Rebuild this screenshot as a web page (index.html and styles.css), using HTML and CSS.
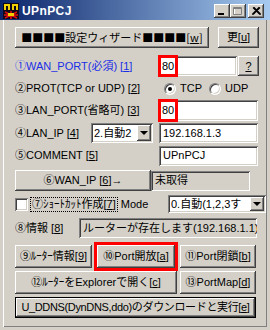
FILE: index.html
```html
<!DOCTYPE html>
<html lang="ja">
<head>
  <meta charset="UTF-8">
  <title>UPnPCJ</title>
  <link rel="stylesheet" href="styles.css">
</head>
<body>
  <div class="window">
    <div class="titlebar">
      <svg class="app-icon" width="16" height="16" viewBox="0 0 16 16">
        <rect width="16" height="16" fill="#100818"/>
        <rect x="1" y="1" width="6" height="6" fill="#f0d000"/>
        <rect x="9" y="1" width="6" height="6" fill="#f0d000"/>
        <rect x="3" y="3" width="2" height="4" fill="#100818"/>
        <rect x="11" y="3" width="2" height="4" fill="#100818"/>
        <path d="M2 9 L14 15 M14 9 L2 15 M8 8 V16 M1 12 H15" stroke="#e01010" stroke-width="1.6"/>
        <rect x="5" y="10" width="6" height="3" fill="#f0d000"/>
      </svg>
      <span class="title">UPnPCJ</span>
      <div class="caption">
        <span class="cap-btn">
          <svg width="8" height="7" viewBox="0 0 8 7"><rect x="0" y="5" width="6" height="2" fill="#000"/></svg>
        </span>
        <span class="cap-btn">
          <svg width="10" height="9" viewBox="0 0 10 9"><path d="M1.5 1.5 h7 v6 h-7 z" fill="none" stroke="#fff" stroke-width="1"/><path d="M0.5 0.5 h8 v7 h-8 z M0.5 1.5 h8" fill="none" stroke="#808080" stroke-width="1"/></svg>
        </span>
        <span class="cap-btn close">
          <svg width="9" height="8" viewBox="0 0 9 8"><path d="M1 0.5 L8 7.5 M8 0.5 L1 7.5 M2 0.5 L9 7.5 M7 0.5 L0 7.5" stroke="#000" stroke-width="1.2"/></svg>
        </span>
      </div>
    </div>

    <div class="client">
      <div class="row r-top">
        <button class="btn wizard cjk">■■■■設定ウィザード■■■■[<u>w</u>]</button>
        <button class="btn update">更[<u>u</u>]</button>
      </div>

      <div class="row r-wan">
        <span class="label w143 blue">①WAN_PORT(必須) [<u>1</u>]</span>
        <div class="field w79">
          <span class="mark">80</span>
        </div>
        <button class="btn qbtn"><u>?</u></button>
      </div>

      <div class="row r-prot">
        <span class="label w143">②PROT(TCP or UDP) [<u>2</u>]</span>
        <span class="radios">
          <span class="radio checked"></span><span class="opt">TCP</span>
          <span class="radio"></span><span class="opt">UDP</span>
        </span>
      </div>

      <div class="row r-lanport">
        <span class="label w143">③LAN_PORT(省略可) [<u>3</u>]</span>
        <div class="field w100">
          <span class="mark">80</span>
        </div>
      </div>

      <div class="row r-lanip">
        <span class="label w76">④LAN_IP [<u>4</u>]</span>
        <div class="select w62">
          <span class="select-text">2.自動2</span>
          <span class="drop"><i></i></span>
        </div>
        <div class="field w99 gap6"><span class="text">192.168.1.3</span></div>
      </div>

      <div class="row r-comment">
        <span class="label w144">⑤COMMENT [<u>5</u>]</span>
        <div class="field w99"><span class="text">UPnPCJ</span></div>
      </div>

      <div class="row r-wanip">
        <button class="btn wanip">⑥WAN_IP [<u>6</u>]→</button>
        <div class="field w99 readonly"><span class="text">未取得</span></div>
      </div>

      <div class="row r-mode">
        <span class="checkbox"></span>
        <span class="focus">⑦ｼｮｰﾄｶｯﾄ作成[<u>7</u>]</span>
        <span class="mode">Mode</span>
        <div class="select w98">
          <span class="select-text">0.自動(1,2,3す</span>
          <span class="drop"><i></i></span>
        </div>
      </div>

      <div class="row r-info">
        <span class="label w64">⑧情報 [<u>8</u>]</span>
        <div class="field w178 readonly"><span class="text">ルーターが存在します(192.168.1.1)</span></div>
      </div>

      <div class="row r-btns">
        <button class="btn w77">⑨ﾙｰﾀｰ情報[<u>9</u>]</button>
        <span class="redbox"><button class="btn fill">⑩Port開放[<u>a</u>]</button></span>
        <button class="btn w76 ml2">⑪Port閉鎖[<u>b</u>]</button>
      </div>

      <div class="row r-btns2">
        <button class="btn w162">⑫ﾙｰﾀｰをExplorerで開く[<u>c</u>]</button>
        <button class="btn w76 ml3">⑬PortMap[<u>d</u>]</button>
      </div>

      <div class="row r-ddns">
        <button class="btn default w241 tight">U_DDNS(DynDNS,ddo)のダウンロードと実行[<u>e</u>]</button>
      </div>
    </div>
  </div>
</body>
</html>
```

FILE: styles.css
```css
* {
  box-sizing: border-box;
}
body {
  margin: 0;
  background: #d4d0c8;
  font-family: "Liberation Sans", "Noto Sans CJK JP", sans-serif;
  font-size: 11px;
  line-height: 13px;
  color: #000;
}
u {
  text-decoration: underline;
  text-underline-offset: 1px;
}
.cjk {
  font-family: "Noto Sans CJK JP", sans-serif;
}
.window {
  width: 270px;
  height: 330px;
  background: #d4d0c8;
  overflow: hidden;
}

/* title bar */
.titlebar {
  height: 20px;
  display: flex;
  align-items: center;
  padding: 2px 6px 0 3px;
  background: linear-gradient(to right, #0a246a, #a6caf0);
}
.app-icon {
  display: block;
}
.title {
  margin-left: 3px;
  color: #fff;
  font-weight: bold;
  font-size: 12px;
  letter-spacing: 0.4px;
  font-family: "Liberation Sans", sans-serif;
}
.caption {
  margin-left: auto;
  display: flex;
}
.cap-btn {
  width: 16px;
  height: 14px;
  display: flex;
  align-items: center;
  justify-content: center;
  background: #d4d0c8;
  box-shadow: inset -1px -1px #404040, inset 1px 1px #fff, inset -2px -2px #808080;
}
.cap-btn.close {
  margin-left: 2px;
}

/* client area */
.client {
  height: 307px;
  margin: 0 3px;
  padding: 7px 0 0 12px;
  box-shadow: inset 1px 0 #fff, inset -1px -1px #808080;
}
.row {
  display: flex;
  align-items: center;
}
.r-top { height: 21px; }
.r-wan { margin-top: 7px; height: 22px; }
.r-prot { margin-top: 2px; height: 19px; }
.r-lanport { margin-top: 1px; height: 23px; }
.r-lanip { margin-top: 1px; height: 20px; }
.r-comment { margin-top: 2px; height: 21px; }
.r-wanip { margin-top: 4px; height: 21px; }
.r-mode { margin-top: 4px; height: 18px; }
.r-info { margin-top: 5px; height: 20px; }
.r-btns { margin-top: 4px; height: 29px; }
.r-btns2 { height: 23px; }
.r-ddns { margin-top: 3px; height: 21px; }

.label {
  white-space: nowrap;
  flex-shrink: 0;
}
.blue { color: #1a2ee6; }
.w64 { width: 64px; }
.w76 { width: 76px; }
.w77 { width: 77px; }
.w143 { width: 143px; }
.w144 { width: 144px; }
.ml2 { margin-left: 2px; }
.ml3 { margin-left: 3px; }
.gap6 { margin-left: 6px; }

/* buttons */
.btn {
  font: inherit;
  color: #000;
  background: #d4d0c8;
  border: none;
  padding: 0;
  height: 100%;
  white-space: nowrap;
  overflow: hidden;
  box-shadow: inset -1px -1px #404040, inset 1px 1px #fff, inset -2px -2px #808080;
}
.btn.cjk {
  font-family: "Noto Sans CJK JP", sans-serif;
}
.wizard { width: 194px; }
.update { width: 41px; margin-left: 9px; }
.qbtn { width: 21px; height: 20px; margin-left: 1px; }
.wanip { width: 136px; }
.r-btns .btn { height: 23px; }
.w162 { width: 162px; }
.w241 { width: 241px; }
.tight { letter-spacing: -0.35px; }
.btn.default {
  box-shadow: inset 0 0 0 1px #000, inset -2px -2px #404040, inset 2px 2px #fff, inset -3px -3px #808080;
}
.redbox {
  width: 84px;
  height: 29px;
  margin-left: 2px;
  border: 3px solid #f00;
  display: flex;
}
.btn.fill {
  width: 100%;
}

/* text fields */
.field {
  position: relative;
  height: 20px;
  background: #fff;
  display: flex;
  align-items: center;
  padding-left: 4px;
  overflow: hidden;
  white-space: nowrap;
  box-shadow: inset 1px 1px #808080, inset -1px -1px #fff, inset 2px 2px #404040, inset -2px -2px #d4d0c8;
}
.r-wan .field { overflow: visible; }
.r-lanport .field { height: 21px; overflow: visible; }
.field.readonly { background: #d4d0c8; }
.w79 { width: 79px; }
.w99 { width: 99px; }
.w100 { width: 100px; }
.w178 { width: 178px; }
.mark {
  position: absolute;
  left: 0;
  top: -1px;
  width: 20px;
  height: calc(100% + 2px);
  border: 3px solid #f00;
  background: #fff;
  padding-left: 1px;
  display: flex;
  align-items: center;
}

/* select */
.select {
  height: 20px;
  display: flex;
  align-items: center;
  background: #fff;
  padding: 2px 2px 2px 3px;
  box-shadow: inset 1px 1px #808080, inset -1px -1px #fff, inset 2px 2px #404040, inset -2px -2px #d4d0c8;
}
.r-mode .select { height: 18px; margin-left: auto; margin-right: 1px; }
.w62 { width: 62px; }
.w98 { width: 98px; }
.select-text {
  flex: 1;
  overflow: hidden;
  white-space: nowrap;
}
.drop {
  width: 14px;
  height: 100%;
  flex-shrink: 0;
  display: flex;
  align-items: center;
  justify-content: center;
  background: #d4d0c8;
  box-shadow: inset -1px -1px #404040, inset 1px 1px #fff, inset -2px -2px #808080;
}
.drop i {
  width: 0;
  height: 0;
  border-left: 4px solid transparent;
  border-right: 4px solid transparent;
  border-top: 4px solid #000;
}

/* radios and checkbox */
.radios {
  display: flex;
  align-items: center;
  margin-left: 6px;
}
.radio {
  width: 12px;
  height: 12px;
  border-radius: 50%;
  background: #fff;
  position: relative;
  border: 1px solid;
  border-color: #808080 #fff #fff #808080;
  box-shadow: inset 1px 1px #404040, inset -1px -1px #d4d0c8;
}
.radio.checked::after {
  content: "";
  position: absolute;
  left: 3px;
  top: 3px;
  width: 4px;
  height: 4px;
  border-radius: 50%;
  background: #000;
}
.opt {
  margin: 0 7px 0 4px;
}
.checkbox {
  width: 13px;
  height: 13px;
  background: #fff;
  flex-shrink: 0;
  box-shadow: inset 1px 1px #808080, inset -1px -1px #fff, inset 2px 2px #404040, inset -2px -2px #d4d0c8;
}
.focus {
  margin-left: 3px;
  padding: 0 1px;
  outline: 1px dotted #000;
  white-space: nowrap;
}
.mode {
  margin-left: 4px;
}
```
